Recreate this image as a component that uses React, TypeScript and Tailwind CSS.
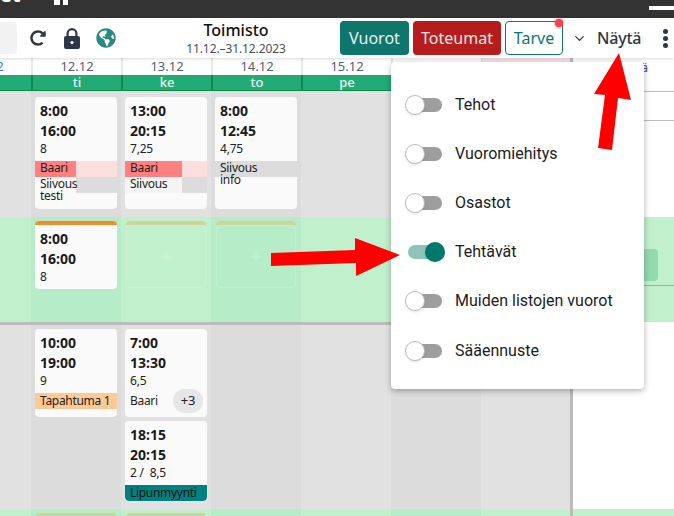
import { ChevronDown, Plus } from "lucide-react";
import { FaGlobeAmericas, FaRedoAlt } from "react-icons/fa";

const days = [
  { date: "11.12", name: "ma" },
  { date: "12.12", name: "ti" },
  { date: "13.12", name: "ke" },
  { date: "14.12", name: "to" },
  { date: "15.12", name: "pe" },
  { date: "16.12", name: "la" },
  { date: "17.12", name: "su" },
];

const toggles = [
  { label: "Tehot", on: false },
  { label: "Vuoromiehitys", on: false },
  { label: "Osastot", on: false },
  { label: "Tehtävät", on: true },
  { label: "Muiden listojen vuorot", on: false },
  { label: "Sääennuste", on: false },
];

function LockIcon() {
  return (
    <svg width="16" height="21" viewBox="0 0 16 21" className="ml-[18px] shrink-0 text-[#2d3748]">
      <path d="M3.6 9V5.6a4.4 4.4 0 0 1 8.8 0V9" fill="none" stroke="currentColor" strokeWidth="2.2" />
      <rect x="0" y="8" width="16" height="13" rx="2" fill="currentColor" />
      <circle cx="8" cy="14.5" r="1.6" fill="#fff" />
    </svg>
  );
}

function Times({ from, to, hours }: { from: string; to: string; hours: string }) {
  return (
    <div className="px-[5px] pt-1 pb-1">
      <div className="text-[14px] leading-5 font-bold text-[#1a1a1a]">{from}</div>
      <div className="text-[14px] leading-5 font-bold text-[#1a1a1a]">{to}</div>
      <div className="text-[12px] leading-4 tracking-[-0.2px] whitespace-pre text-[#222]">{hours}</div>
    </div>
  );
}

function Task({
  label,
  sub,
  width,
  fill,
  rest,
}: {
  label: string;
  sub?: string;
  width: string;
  fill: string;
  rest: string;
}) {
  return (
    <div className={`flex h-4 ${rest}`}>
      <div
        className={`h-4 pl-[5px] pt-[1px] text-[12px] leading-3 tracking-[-0.3px] whitespace-nowrap text-[#222] ${width} ${fill}`}
      >
        {label}
        {sub && <div>{sub}</div>}
      </div>
    </div>
  );
}

function Card({ height, children }: { height: string; children: React.ReactNode }) {
  return <div className={`w-[82px] shrink-0 overflow-hidden rounded bg-[#fafafa] ${height}`}>{children}</div>;
}

function Slot() {
  return (
    <div className="mx-px">
      <div className="h-1 rounded-t-sm bg-[#cdd49a]" />
      <div className="flex h-[63px] items-center justify-center rounded-sm border border-white/15">
        <Plus size={16} strokeWidth={1} className="text-white/30" />
      </div>
    </div>
  );
}

function Lane({
  height,
  tone,
  pad,
  cols,
}: {
  height: string;
  tone: "gray" | "green";
  pad: string;
  cols: Record<number, React.ReactNode>;
}) {
  return (
    <div className={`flex shrink-0 overflow-hidden ${height}`}>
      {days.map((d, i) => {
        const dark = i % 2 === 1;
        const bg =
          tone === "gray" ? (dark ? "bg-[#dcdcdc]" : "bg-[#e1e1e1]") : dark ? "bg-[#b6edc8]" : "bg-[#c1f0cd]";
        return (
          <div key={d.date} className={`flex w-[90px] shrink-0 flex-col gap-1 px-1 ${pad} ${bg}`}>
            {cols[i]}
          </div>
        );
      })}
    </div>
  );
}

function Toggle({ on }: { on: boolean }) {
  if (on) {
    return (
      <div className="flex h-5 w-10 items-center">
        <div className="ml-[3px] flex h-[14px] w-[34px] items-center justify-end rounded-full bg-[#8fc4ba]">
          <div className="-mr-[3px] h-5 w-5 rounded-full bg-[#00796b] shadow-sm" />
        </div>
      </div>
    );
  }
  return (
    <div className="flex h-5 w-10 items-center">
      <div className="ml-[3px] flex h-[14px] w-[34px] items-center rounded-full bg-[#9e9e9e]">
        <div className="-ml-[3px] h-5 w-5 rounded-full border border-[#bdbdbd] bg-white shadow-sm" />
      </div>
    </div>
  );
}

export default function App() {
  return (
    <div className="relative h-[516px] w-[674px] overflow-hidden bg-white font-['Noto_Sans',sans-serif]">
      {/* Window bar */}
      <div className="flex h-[18px] items-start overflow-hidden bg-[#333333]">
        <span className="-mt-[15px] w-[54px] shrink-0 text-[20px] leading-5 font-bold text-white">et</span>
        <div className="h-[5px] w-[6px] bg-white" />
        <div className="ml-[3px] h-[5px] w-[5px] bg-white" />
        <div className="mt-[6px] ml-auto h-1 w-[25px] bg-white" />
      </div>

      {/* Toolbar */}
      <div className="relative z-10 flex h-10 items-center bg-white shadow-[0_1px_3px_rgba(0,0,0,0.15)]">
        <div className="h-8 w-[17px] shrink-0 rounded-r bg-[#f2f2f2]" />
        <FaRedoAlt size={16} className="ml-[13px] shrink-0 text-[#2d3748]" />
        <LockIcon />
        <FaGlobeAmericas size={20} className="ml-[16px] shrink-0 text-[#2a8a80]" />
        <div className="w-[224px] shrink-0 pl-4 text-center">
          <div className="text-[16px] leading-[22px] font-medium text-[#111]">Toimisto</div>
          <div className="text-[12px] leading-4 tracking-[-0.1px] text-[#4a4f57]">11.12.–31.12.2023</div>
        </div>
        <button className="flex h-[34px] w-[69px] shrink-0 items-center justify-center rounded bg-[#0f766e] text-[16px] text-white/90">
          Vuorot
        </button>
        <button className="ml-1 flex h-[34px] w-[88px] shrink-0 items-center justify-center rounded bg-[#b71c1c] text-[16px] text-white/90">
          Toteumat
        </button>
        <button className="relative ml-1 flex h-[34px] w-[58px] shrink-0 items-center justify-center rounded border border-[#0f766e] text-[16px] text-[#0f766e]">
          Tarve
          <span className="absolute -top-[3px] -right-[1px] h-2 w-2 rounded-full bg-[#f44352] shadow-[0_0_3px_#f44352]" />
        </button>
        <ChevronDown size={15} strokeWidth={2} className="ml-[9px] shrink-0 text-[#2d3748]" />
        <span className="ml-[10px] text-[16px] font-medium tracking-[-0.2px] text-[#2d3748]">Näytä</span>
        <div className="mr-[6px] ml-auto flex flex-col gap-[2px]">
          <div className="h-[5px] w-[5px] rounded-full bg-[#2d3748]" />
          <div className="h-[5px] w-[5px] rounded-full bg-[#2d3748]" />
          <div className="h-[5px] w-[5px] rounded-full bg-[#2d3748]" />
        </div>
      </div>

      <div className="flex h-[458px]">
        {/* Calendar */}
        <div className="flex w-[570px] shrink-0 flex-col overflow-hidden">
          <div className="-ml-[59px] flex flex-col">
            <div className="flex h-[17px] shrink-0">
              {days.map((d, i) => (
                <div
                  key={d.date}
                  className={`w-[90px] shrink-0 border-l-2 text-center text-[13px] leading-[17px] ${
                    i === 0 ? "text-[#3b82c4]" : "text-[#56606e]"
                  } ${i === 6 ? "border-[#e2dfe0] bg-[#fbe4ea]" : "border-[#e8e8e8] bg-white"}`}
                >
                  {d.date}
                </div>
              ))}
            </div>
            <div className="flex h-4 shrink-0 border-b border-[#0b8a4c] bg-[#22ab75]">
              {days.map((d) => (
                <div
                  key={d.name}
                  className="w-[90px] shrink-0 border-l-2 border-[#0b8a4c] text-center text-[13px] leading-[15px] font-medium text-white/90"
                >
                  {d.name}
                </div>
              ))}
            </div>

            <Lane
              height="h-[126px]"
              tone="gray"
              pad="pt-[6px]"
              cols={{
                1: (
                  <Card height="h-[112px]">
                    <Times from="8:00" to="16:00" hours="8" />
                    <Task label="Baari" width="w-[41px]" fill="bg-[#ff8080]" rest="bg-[#fddede]" />
                    <Task label="Siivous" sub="testi" width="w-[41px]" fill="bg-[#fafafa]" rest="bg-[#dcdcdc]" />
                  </Card>
                ),
                2: (
                  <Card height="h-[112px]">
                    <Times from="13:00" to="20:15" hours="7,25" />
                    <Task label="Baari" width="w-[57px]" fill="bg-[#ff8080]" rest="bg-[#fddede]" />
                    <Task label="Siivous" width="w-[57px]" fill="bg-[#f4f4f4]" rest="bg-[#dcdcdc]" />
                  </Card>
                ),
                3: (
                  <Card height="h-[112px]">
                    <Times from="8:00" to="12:45" hours="4,75" />
                    <Task label="Siivous" sub="info" width="w-[82px]" fill="bg-transparent" rest="bg-[#dcdcdc]" />
                  </Card>
                ),
              }}
            />

            <Lane
              height="h-[105px]"
              tone="green"
              pad="pt-1"
              cols={{
                1: (
                  <Card height="h-[68px]">
                    <div className="h-1 bg-[#f28c28]" />
                    <Times from="8:00" to="16:00" hours="8" />
                  </Card>
                ),
                2: <Slot />,
                3: <Slot />,
              }}
            />

            <div className="h-[3px] shrink-0 bg-[#bbbbbb]" />

            <Lane
              height="h-[184px]"
              tone="gray"
              pad="pt-1"
              cols={{
                1: (
                  <Card height="h-[88px]">
                    <Times from="10:00" to="19:00" hours="9" />
                    <div className="h-4 bg-[#fdc995] pl-[5px] text-[12px] leading-4 tracking-[-0.3px] whitespace-nowrap text-[#222]">
                      Tapahtuma 1
                    </div>
                  </Card>
                ),
                2: (
                  <>
                    <Card height="h-[88px]">
                      <Times from="7:00" to="13:30" hours="6,5" />
                      <div className="flex h-4 items-center justify-between pl-[5px] text-[12px] tracking-[-0.3px] text-[#222]">
                        <span>Baari</span>
                        <span className="mr-1 flex h-6 w-[30px] items-center justify-center rounded-full bg-[#e6e6e6] text-[13px]">
                          +3
                        </span>
                      </div>
                    </Card>
                    <Card height="h-[80px]">
                      <Times from="18:15" to="20:15" hours="2 /  8,5" />
                      <div className="h-4 rounded-b bg-[#008080] pl-[5px] text-[12px] leading-4 tracking-[-0.3px] text-[#111]">
                        Lipunmyynti
                      </div>
                    </Card>
                  </>
                ),
              }}
            />

            <Lane height="h-[27px]" tone="green" pad="pt-1" cols={{ 1: <Slot />, 2: <Slot /> }} />
          </div>
        </div>

        {/* Side panel */}
        <div className="flex flex-1 flex-col border-l-[3px] border-[#bbbbbb]">
          <div className="h-[34px] shrink-0 border-b border-[#bdbdbd] pr-[26px] text-right text-[12px] leading-5 text-[#2c4a7c]">
            Näytä
          </div>
          <div className="h-[29px] shrink-0 border-b border-[#bdbdbd]" />
          <div className="h-[96px] shrink-0" />
          <div className="h-[105px] shrink-0 bg-[#c1f0cd] pt-[32px]">
            <div className="h-8 w-[85px] rounded-r bg-[#93dbac]" />
            <div className="mt-1 h-px bg-[#a8a8a8]" />
          </div>
          <div className="h-[187px] shrink-0" />
          <div className="flex-1 bg-[#c1f0cd]" />
        </div>
      </div>

      {/* Näytä menu */}
      <div className="absolute top-[62px] left-[391px] z-20 h-[327px] w-[253px] rounded bg-white pt-[18px] pl-[14px] font-['Roboto',sans-serif] shadow-[0_2px_6px_rgba(0,0,0,0.3)]">
        {toggles.map((t) => (
          <div key={t.label} className="flex h-[49.2px] items-center gap-[10px]">
            <Toggle on={t.on} />
            <span className="text-[16px] text-[#1c1c1c]">{t.label}</span>
          </div>
        ))}
      </div>

      {/* Red annotation arrows */}
      <svg className="pointer-events-none absolute inset-0 z-30" width="674" height="516" viewBox="0 0 674 516">
        <polygon points="619,53 631,100 618,98 612,150 598,148 605,95 594,94" fill="#ff0000" />
        <polygon points="271,253 355,250 355,238 400,255 356,276 356,263 271,266" fill="#ff0000" />
      </svg>
    </div>
  );
}
